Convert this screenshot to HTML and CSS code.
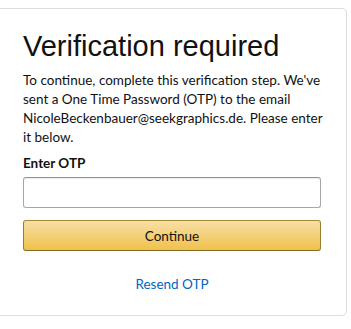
FILE: index.html
```html
<!DOCTYPE html>
<html>
<head>
<meta charset="utf-8">
<link rel="stylesheet" href="styles.css">
</head>
<body>
<div class="card">
  <h1 class="title">Verification required</h1>
  <p class="desc">To continue, complete this verification step. We've sent a One Time Password (OTP) to the email NicoleBeckenbauer@seekgraphics.de. Please enter it below.</p>
  <label class="label" for="otp">Enter OTP</label>
  <input class="input" id="otp" type="text">
  <button class="btn">Continue</button>
  <div class="resend"><a class="link" href="#">Resend OTP</a></div>
</div>
</body>
</html>
```
FILE: styles.css
```css
html, body {
  margin: 0;
  padding: 0;
  background: #fff;
}
body {
  font-family: "Liberation Sans", Arial, sans-serif;
  color: #111;
  padding-top: 8px;
}
.card {
  margin-left: -4px;
  border: 1px solid #ddd;
  border-radius: 5px;
  padding: 19px 25px 21px 26px;
  box-sizing: content-box;
  display: flex;
  flex-direction: column;
  width: 298px;
}
.title {
  margin: 0 0 7px;
  font-weight: 400;
  font-size: 29px;
  line-height: 36px;
  color: #111;
}
.desc {
  margin: 0 -8px 7px 0;
  font-family: Lato, sans-serif;
  font-size: 13.5px;
  line-height: 19px;
}
.label {
  font-family: Lato, sans-serif;
  font-size: 13.5px;
  font-weight: 700;
  line-height: 19px;
  margin-bottom: 4px;
}
.input {
  box-sizing: border-box;
  height: 31px;
  width: 100%;
  border: 1px solid #a6a6a6;
  border-top-color: #949494;
  border-radius: 3px;
  box-shadow: 0 1px 0 rgba(0,0,0,.07) inset;
  margin: 0 0 12px;
  padding: 3px 7px;
  font-size: 13px;
}
.btn {
  box-sizing: border-box;
  height: 31px;
  width: 100%;
  border: 1px solid;
  border-color: #a88734 #9c7e31 #846a29;
  border-radius: 3px;
  background: linear-gradient(to bottom, #f7dfa5, #f0c14b);
  font-family: Lato, sans-serif;
  font-size: 13.5px;
  color: #111;
  padding: 0;
}
.resend {
  text-align: center;
  margin-top: 24px;
  font-family: Lato, sans-serif;
  font-size: 13.5px;
  line-height: 19px;
}
.link {
  color: #0066c0;
  text-decoration: none;
}
```
